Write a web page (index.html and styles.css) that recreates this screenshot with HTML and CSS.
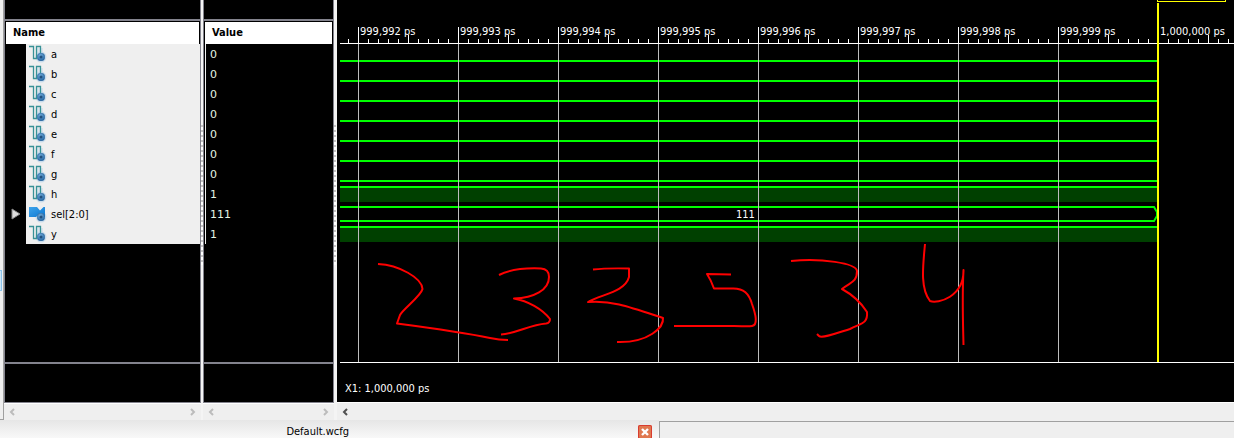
FILE: index.html
```html
<!DOCTYPE html>
<html lang="en">
<head>
<meta charset="utf-8">
<title>Default.wcfg</title>
<link rel="stylesheet" href="styles.css">
</head>
<body>
<svg width="0" height="0" class="defs" aria-hidden="true">
  <defs>
    <linearGradient id="bus" x1="0" y1="0" x2="1" y2="1"><stop offset="0" stop-color="#3ea4ec"/><stop offset="1" stop-color="#0b76cf"/></linearGradient>
    <radialGradient id="ball" cx=".4" cy=".3" r=".7"><stop offset="0" stop-color="#6ea9d8"/><stop offset="1" stop-color="#2a6aa6"/></radialGradient>
    <symbol id="port" viewBox="0 0 8 8">
      <circle cx="4" cy="4" r="3.9" fill="url(#ball)" stroke="#2c6599" stroke-width=".4"/>
      <path d="M4 2.500v3M2.500 4h3" stroke="#123c66" stroke-width="1"/>
    </symbol>
    <symbol id="wire" viewBox="0 0 18 18">
      <path d="M8 3h6v11H8z" fill="#cfdfec" opacity=".7"/>
      <circle cx="12" cy="12" r="5.500" fill="#bcd5ea" opacity=".7"/>
      <path d="M0 1.500h4.500v12h3v-12h4v7" fill="none" stroke="#379196" stroke-width="1.300"/>
      <use href="#port" x="8" y="8" width="8" height="8"/>
    </symbol>
    <symbol id="vector" viewBox="0 0 18 18">
      <circle cx="12" cy="12" r="5.500" fill="#bcd5ea" opacity=".7"/>
      <path d="M0 2h8l3 3.500L14.500 2H16v10h-3l-3-3-3 3H0z" fill="url(#bus)"/>
      <use href="#port" x="8" y="8" width="8" height="8"/>
    </symbol>
  </defs>
</svg>
<div class="app">
  <main class="viewer">
    <div class="gutter"><span class="gutter-mark"></span></div>
    <section class="pane names">
      <div class="pane-body">
        <div class="band"></div>
        <h2 class="head">Name</h2>
        <ul class="rows">
          <li><span class="tree"></span><span class="cell"><svg class="icon"><use href="#wire"/></svg>a</span></li>
          <li><span class="tree"></span><span class="cell"><svg class="icon"><use href="#wire"/></svg>b</span></li>
          <li><span class="tree"></span><span class="cell"><svg class="icon"><use href="#wire"/></svg>c</span></li>
          <li><span class="tree"></span><span class="cell"><svg class="icon"><use href="#wire"/></svg>d</span></li>
          <li><span class="tree"></span><span class="cell"><svg class="icon"><use href="#wire"/></svg>e</span></li>
          <li><span class="tree"></span><span class="cell"><svg class="icon"><use href="#wire"/></svg>f</span></li>
          <li><span class="tree"></span><span class="cell"><svg class="icon"><use href="#wire"/></svg>g</span></li>
          <li><span class="tree"></span><span class="cell"><svg class="icon"><use href="#wire"/></svg>h</span></li>
          <li><button class="tree" aria-label="Expand sel"><svg width="10" height="12"><path d="M1 1v10l8-5z" fill="#ddd" stroke="#888"/></svg></button><span class="cell"><svg class="icon"><use href="#vector"/></svg>sel[2:0]</span></li>
          <li><span class="tree"></span><span class="cell"><svg class="icon"><use href="#wire"/></svg>y</span></li>
        </ul>
        <div class="foot"></div>
      </div>
      <div class="scroll">
        <button aria-label="Scroll left"><svg class="arrow"><path d="M6 1 3 4l3 3"/></svg></button>
        <button aria-label="Scroll right"><svg class="arrow"><path d="M2 1l3 3-3 3"/></svg></button>
      </div>
    </section>
    <div class="splitter narrow"><span class="grip"></span></div>
    <section class="pane values">
      <div class="pane-body">
        <div class="band"></div>
        <h2 class="head">Value</h2>
        <ul class="rows">
          <li>0</li><li>0</li><li>0</li><li>0</li><li>0</li><li>0</li><li>0</li><li>1</li><li>111</li><li>1</li>
        </ul>
        <div class="foot"></div>
      </div>
      <div class="scroll">
        <button aria-label="Scroll left"><svg class="arrow"><path d="M6 1 3 4l3 3"/></svg></button>
        <button aria-label="Scroll right"><svg class="arrow"><path d="M2 1l3 3-3 3"/></svg></button>
      </div>
    </section>
    <div class="splitter"><span class="grip"></span></div>
    <section class="wave">
      <div class="wave-body">
        <div class="ruler">
          <span>999,992 ps</span><span>999,993 ps</span><span>999,994 ps</span><span>999,995 ps</span><span>999,996 ps</span><span>999,997 ps</span><span>999,998 ps</span><span>999,999 ps</span><span>1,000,000 ps</span>
        </div>
        <svg class="plot" role="img" aria-label="Signal waveforms">
          <g transform="translate(-340 -44)">
            <g fill="#004000">
              <path d="M340 188h818v14H340zM340 228h818v14H340z"/>
            </g>
            <path fill="none" stroke="#0f0" stroke-width="2" d="M340 61h818M340 81h818M340 101h818M340 121h818M340 141h818M340 161h818M340 181h818M340 187h818M340 207h814l3 5v4l-3 5H340M340 227h818"/>
            <text class="bus-value" x="736" y="218">111</text>
            <path stroke="#bdbdbd" d="M358.500 44v318M458.500 44v318M558.500 44v318M658.500 44v318M758.500 44v318M858.500 44v318M958.500 44v318M1058.500 44v318"/>
            <g class="ink">
              <path d="M378 264C399 265 422 278 422.500 289C421 296 403 309 400 315L397 323.500C431 328 471 334 490 338Q499 340 508 340"/>
              <path d="M499 275C511 269 529 268 541 268.500Q549 269 549 277C549 290 534 298 514 298.500C528 301 542 309 550 319Q550 323 546 323.500C529 325 518 333 501 334.500"/>
              <path d="M593 269.500Q606 268 629 268.500V277C625 292 602 294 588 302C612 300 630 307 663 318C664 327 649 343 617 342"/>
              <path d="M731 274.500L707 274Q711 280 714 288.500H732C744 288 749 294 752 304C756 315 758 325 752 326C746 327 740 325.500 730 326H674"/>
              <path d="M791 261C821 258 856 263 857 271C857 283 850 282 842 289C853 295 860 301 867 312C868 324 861 323 850 329C840 332 822 339 819 336L817 334"/>
              <path d="M925 244C923 266 920 288 930 301C938 304 964 297 963.500 270C962 296 963 322 963.500 345"/>
            </g>
          </g>
        </svg>
        <p class="status">X1: 1,000,000 ps</p>
        <span class="cursor"></span>
        <span class="cursor-tag"></span>
      </div>
      <div class="scroll dark">
        <button aria-label="Scroll left"><svg class="arrow"><path d="M6 1 3 4l3 3"/></svg></button>
      </div>
    </section>
  </main>
  <footer class="tabs">
    <div class="tab">
      <span>Default.wcfg</span>
      <button class="close" aria-label="Close Default.wcfg"><svg width="14" height="14"><path d="M4 4l6 6M10 4l-6 6" stroke="#fff" stroke-width="2.400"/></svg></button>
    </div>
    <div class="tab-rest"></div>
  </footer>
</div>
</body>
</html>
```

FILE: styles.css
```css
* { box-sizing: border-box; }

body {
  margin: 0;
  background: #efefef;
  font: 11px/20px "DejaVu Sans Condensed", "Noto Sans", sans-serif;
  color: #000;
  overflow: hidden;
}

.defs { position: absolute; }

button {
  border: 0;
  padding: 0;
  background: none;
}

svg { display: block; }

.app {
  display: flex;
  flex-direction: column;
  min-height: 100vh;
}

.viewer { display: flex; }

.gutter {
  width: 4px;
  padding-top: 270px;
  border-right: 1px solid #a0a0a0;
  border-bottom: 1px solid #a0a0a0;
}

.gutter-mark {
  display: block;
  width: 2px;
  height: 21px;
  background: #cce6f8;
  border: 1px solid #8cc3ea;
  border-left: 0;
}

.pane {
  display: flex;
  flex-direction: column;
  flex: none;
}

.names { width: 197px; }
.values { width: 131px; }

.pane-body {
  flex: 1;
  display: flex;
  flex-direction: column;
  background: #000;
  border: 1px solid #83838d;
  border-top: 0;
}

.band {
  height: 21px;
  border-bottom: 2px solid #83838d;
}

.head {
  margin: 1px 1px 0;
  padding-left: 7px;
  background: #fff;
  font-size: 11px;
  line-height: 22px;
}

.rows {
  flex: 1;
  margin: 0;
  padding: 0;
  list-style: none;
  line-height: 22px;
}

.rows li {
  display: flex;
  height: 20px;
}

.tree {
  width: 21px;
  display: flex;
  align-items: center;
  justify-content: center;
}

.cell {
  flex: 1;
  display: flex;
  align-items: flex-start;
  gap: 4px;
  padding-left: 3px;
  background: #efefef;
}

.icon {
  width: 18px;
  height: 18px;
  margin-top: 1px;
}

.values .rows li {
  margin-left: 1px;
  padding-left: 4px;
  border-left: 1px solid #efefef;
  color: #e4f4e4;
  font-family: "DejaVu Sans", sans-serif;
}

.foot {
  height: 40px;
  border-top: 2px solid #83838d;
}

.scroll {
  height: 17px;
  display: flex;
  justify-content: space-between;
  align-items: center;
  padding: 0 4px;
  border-top: 1px solid #fff;
}

.scroll.dark { height: 18px; }

.arrow {
  width: 8px;
  height: 8px;
  fill: none;
  stroke: #bcbcbc;
  stroke-width: 2;
}

.dark .arrow { stroke: #505050; }

.splitter {
  width: 3px;
  padding-top: 125px;
  background: #f4f4f4;
}

.splitter.narrow { width: 2px; }

.grip {
  display: block;
  width: 2px;
  height: 140px;
  background: repeating-linear-gradient(#c4c4c4 0 2px, #fff 2px 5px);
}

.wave {
  flex: 1;
  min-width: 0;
  display: flex;
  flex-direction: column;
}

.wave-body {
  position: relative;
  flex: 1;
  padding: 27px 0 0 3px;
  background: #000;
  color: #fff;
  overflow: hidden;
}

.ruler {
  display: flex;
  height: 17px;
  padding-left: 18px;
  border-bottom: 1px solid #fff;
  line-height: 9px;
  white-space: nowrap;
  background:
    linear-gradient(to right, #fff 1px, transparent 1px) 8px 100% / 10px 4px repeat-x,
    linear-gradient(to right, #fff 1px, transparent 1px) 68px 100% / 100px 8px repeat-x;
}

.ruler span {
  flex: 0 0 100px;
  padding-left: 1px;
  border-left: 1px solid #fff;
}

.plot {
  width: 100%;
  height: 319px;
  border-bottom: 1px solid #fff;
}

.bus-value {
  fill: #fff;
  font-size: 11px;
}

.ink {
  fill: none;
  stroke: #f00;
  stroke-width: 2;
  stroke-linejoin: round;
}

.status {
  margin: 0;
  padding: 16px 5px 3px;
}

.cursor {
  position: absolute;
  left: 820px;
  top: 3px;
  width: 2px;
  height: 359px;
  background: #ff0;
}

.cursor-tag {
  position: absolute;
  left: 820px;
  top: 0;
  width: 69px;
  height: 2px;
  border: 1px solid #ff0;
  border-top: 0;
}

.tabs {
  flex: 1;
  display: flex;
  min-height: 18px;
}

.tab {
  flex: 0 0 659px;
  display: flex;
  align-items: flex-start;
  justify-content: flex-end;
  gap: 289px;
  height: 18px;
  padding: 2px 7px 0 0;
  background: linear-gradient(#e6e6e6, #f8f8f8);
}

.close {
  margin-top: 3px;
  border-radius: 2px;
  background: #e07850;
  box-shadow: inset 0 0 0 1px #d83c30;
}

.tab-rest {
  flex: 1;
  margin-top: 1px;
  border-top: 1px solid #a0a0a0;
  border-left: 1px solid #a0a0a0;
}
```
